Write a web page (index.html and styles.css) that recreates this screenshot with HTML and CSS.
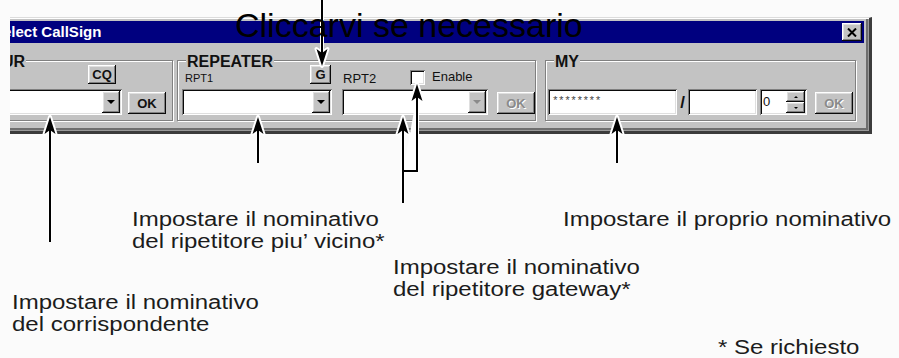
FILE: index.html
```html
<!DOCTYPE html>
<html lang="it">
<head>
    <meta charset="UTF-8">
    <title>Select CallSign</title>
    <link rel="stylesheet" href="styles.css">
</head>
<body>
<div class="stage">

    <!-- finestra di dialogo (tagliata a sinistra come nello screenshot) -->
    <div class="dlg-clip">
        <div class="dlg">
            <div class="titlebar">
                <span class="title">Select CallSign</span>
                <span class="btn close">
                    <svg width="10" height="9" viewBox="0 0 10 9"><path d="M1 0.5 L9 8.5 M9 0.5 L1 8.5" stroke="#000" stroke-width="2"/></svg>
                </span>
            </div>

            <div class="dlg-body">
                <!-- UR -->
                <div class="group group-ur">
                    <span class="legend legend-ur">UR</span>
                    <div class="field field-ur">
                        <div class="field-head head-ur">
                            <span class="btn small">CQ</span>
                        </div>
                        <div class="combo">
                            <span class="drop"><i class="tri"></i></span>
                        </div>
                    </div>
                    <span class="btn ok ok-ur">OK</span>
                </div>

                <!-- REPEATER -->
                <div class="group group-rpt">
                    <span class="legend">REPEATER</span>
                    <div class="field field-rpt1">
                        <div class="field-head head-rpt1">
                            <span class="lbl lbl-rpt1">RPT1</span>
                            <span class="btn small btn-g">G</span>
                        </div>
                        <div class="combo">
                            <span class="drop"><i class="tri"></i></span>
                        </div>
                    </div>
                    <div class="field field-rpt2">
                        <div class="field-head head-rpt2">
                            <span class="lbl lbl-rpt2">RPT2</span>
                            <span class="check"></span>
                            <span class="lbl lbl-enable">Enable</span>
                        </div>
                        <div class="combo">
                            <span class="drop"><i class="tri off"></i></span>
                        </div>
                    </div>
                    <span class="btn ok ok-rpt disabled">OK</span>
                </div>

                <!-- MY -->
                <div class="group group-my">
                    <span class="legend">MY</span>
                    <div class="edit edit-my">********</div>
                    <span class="slash">/</span>
                    <div class="edit edit-sfx"></div>
                    <div class="edit spin">
                        <span class="spin-val">0</span>
                        <span class="spin-btns">
                            <span class="btn spin-btn"><i class="tri-s up"></i></span>
                            <span class="btn spin-btn"><i class="tri-s"></i></span>
                        </span>
                    </div>
                    <span class="btn ok ok-my disabled">OK</span>
                </div>
            </div>
        </div>
    </div>

    <!-- frecce delle annotazioni -->
    <svg class="arrows" width="899" height="358" viewBox="0 0 899 358">
        <g class="halo" fill="#fff" stroke="#fff" stroke-width="4" stroke-linejoin="round">
            <path d="M50 128 V242 M258 128 V163 M617 128 V163 M403 128 V203 M403 171 H417 V95 M322 0 V54"/>
            <path d="M50 117 L55.5 134 L50 130 L44.5 134 Z"/>
            <path d="M258 117 L263.5 134 L258 130 L252.5 134 Z"/>
            <path d="M617 117 L622.5 134 L617 130 L611.5 134 Z"/>
            <path d="M403 117 L408.5 134 L403 130 L397.5 134 Z"/>
            <path d="M417 84 L422.5 101 L417 97 L411.5 101 Z"/>
            <path d="M322 66 L327.5 49 L322 53 L316.5 49 Z"/>
        </g>
        <g fill="none" stroke="#000" stroke-width="2">
            <path d="M50 128 V242 M258 128 V163 M617 128 V163 M403 128 V203 M403 171 H418 M417 171 V95 M322 0 V54"/>
        </g>
        <g fill="#000">
            <path d="M50 117 L55.5 134 L50 130 L44.5 134 Z"/>
            <path d="M258 117 L263.5 134 L258 130 L252.5 134 Z"/>
            <path d="M617 117 L622.5 134 L617 130 L611.5 134 Z"/>
            <path d="M403 117 L408.5 134 L403 130 L397.5 134 Z"/>
            <path d="M417 84 L422.5 101 L417 97 L411.5 101 Z"/>
            <path d="M322 66 L327.5 49 L322 53 L316.5 49 Z"/>
        </g>
    </svg>

    <!-- testi delle annotazioni -->
    <div class="callout callout-top">Cliccarvi se necessario</div>
    <div class="note note-ur">Impostare il nominativo<br>del corrispondente</div>
    <div class="note note-rpt1">Impostare il nominativo<br>del ripetitore piu’ vicino*</div>
    <div class="note note-rpt2">Impostare il nominativo<br>del ripetitore gateway*</div>
    <div class="note note-my">Impostare il proprio nominativo</div>
    <div class="note note-star">* Se richiesto</div>
</div>
</body>
</html>
```

FILE: styles.css
```css
body {
    margin: 0;
    background-color: #fbfbfb;
    font-family: "Liberation Sans", Arial, sans-serif;
}
.stage {
    position: relative;
    width: 899px;
    height: 358px;
    overflow: hidden;
}

/* Finestra */
.dlg-clip {
    margin: 17px 0 0 10px;
    width: 862px;
    overflow: hidden;
}
.dlg {
    margin-left: -22px;
    width: 884px;
    box-sizing: border-box;
    background-color: #c3c3c3;
    border-style: solid;
    border-width: 1px 3px 3px 1px;
    border-color: #dcdcdc #3c3c3c #3c3c3c #dcdcdc;
    box-shadow: inset 1px 1px #fff, inset -1px -1px #9a9a9a, inset -3px -3px #6e6e6e;
    padding: 3px 5px 4px 3px;
}
.titlebar {
    display: flex;
    align-items: center;
    height: 22px;
    background-color: #00007f;
    padding-left: 1px;
    padding-right: 2px;
}
.title {
    flex: 1;
    color: #fff;
    font-weight: bold;
    font-size: 15px;
    line-height: 22px;
    white-space: nowrap;
}
.dlg-body {
    display: flex;
    align-items: flex-start;
    padding: 17px 0 6px 3px;
}

/* Gruppi */
.group {
    position: relative;
    box-sizing: border-box;
    height: 61px;
    display: flex;
    align-items: flex-end;
    border: 1px solid #808080;
    box-shadow: inset 1px 1px #fff, 1px 1px #fff;
    padding: 4px 0 5px 0;
}
.group-ur { width: 178px; }
.group-rpt { width: 359px; margin-left: 4px; }
.group-my { width: 311px; margin-left: 9px; }
.legend {
    position: absolute;
    top: -8px;
    left: 8px;
    padding: 0 1px;
    background-color: #c3c3c3;
    font-weight: bold;
    font-size: 16px;
    line-height: 18px;
    color: #111;
}
.legend-ur { left: 5px; }

.field {
    display: flex;
    flex-direction: column;
    gap: 4px;
}
.field-head {
    display: flex;
    align-items: flex-end;
    height: 20px;
}
.field-ur { width: 116px; margin-left: 10px; }
.head-ur { justify-content: flex-end; align-items: flex-start; padding-right: 6px; }
.field-rpt1 { width: 150px; margin-left: 4px; }
.head-rpt1 { justify-content: space-between; padding: 0 1px 0 3px; }
.head-rpt1 .btn-g { align-self: flex-start; }
.field-rpt2 { width: 146px; margin-left: 10px; }
.head-rpt2 { padding-left: 1px; }

.lbl {
    line-height: 13px;
    color: #111;
    white-space: nowrap;
}
.lbl-rpt1 { font-size: 11px; }
.lbl-rpt2 { font-size: 13px; width: 67px; }
.lbl-enable { font-size: 13px; margin-left: 7px; padding-bottom: 2px; }

/* Pulsanti stile Win95 */
.btn {
    display: flex;
    align-items: center;
    justify-content: center;
    box-sizing: border-box;
    background-color: #c3c3c3;
    box-shadow: inset -1px -1px #0a0a0a, inset 1px 1px #fff, inset -2px -2px #808080, inset 2px 2px #dfdfdf;
    font-weight: bold;
    font-size: 13px;
    color: #111;
}
.btn.small { width: 28px; height: 19px; }
.btn.btn-g { width: 21px; }
.btn.ok { width: 38px; height: 22px; margin-bottom: 1px; }
.ok-ur { margin-left: 6px; }
.ok-rpt { width: 36px; margin-left: 9px; }
.ok-my { width: 35px; margin-left: 8px; }
.btn.disabled {
    color: #8a8a8a;
    text-shadow: 1px 1px #fff;
}
.btn.close {
    width: 20px;
    height: 18px;
}

/* Campi */
.combo, .edit {
    box-sizing: border-box;
    height: 26px;
    background-color: #fff;
    box-shadow: inset 1px 1px #808080, inset -1px -1px #fff, inset 2px 2px #0a0a0a, inset -2px -2px #dfdfdf;
    padding: 2px;
}
.combo {
    display: flex;
    justify-content: flex-end;
}
.drop {
    width: 18px;
    display: flex;
    align-items: center;
    justify-content: center;
    background-color: #c3c3c3;
    box-shadow: inset -1px -1px #0a0a0a, inset 1px 1px #fff, inset -2px -2px #808080, inset 2px 2px #dfdfdf;
}
.tri {
    width: 0;
    height: 0;
    border-left: 4px solid transparent;
    border-right: 4px solid transparent;
    border-top: 4px solid #000;
}
.tri.off {
    border-top-color: #8a8a8a;
}

.edit-my {
    width: 129px;
    margin-left: 2px;
    padding: 5px 4px;
    font-family: "Liberation Mono", monospace;
    font-size: 11px;
    line-height: 14px;
    letter-spacing: -0.5px;
    color: #444;
}
.slash {
    width: 11px;
    text-align: center;
    font-weight: bold;
    font-size: 17px;
    line-height: 24px;
    color: #111;
}
.edit-sfx { width: 69px; }
.spin {
    width: 47px;
    margin-left: 3px;
    display: flex;
}
.spin-val {
    flex: 1;
    font-size: 13px;
    line-height: 22px;
    padding-left: 1px;
    color: #111;
}
.spin-btns {
    display: flex;
    flex-direction: column;
    width: 19px;
}
.btn.spin-btn {
    flex: 1;
}
.tri-s {
    width: 0;
    height: 0;
    border-left: 2px solid transparent;
    border-right: 2px solid transparent;
    border-top: 2px solid #000;
}
.tri-s.up {
    border-top: 0;
    border-bottom: 2px solid #000;
}
.check {
    box-sizing: border-box;
    width: 15px;
    height: 15px;
    background-color: #fff;
    box-shadow: inset 1px 1px #808080, inset -1px -1px #fff, inset 2px 2px #0a0a0a, inset -2px -2px #dfdfdf;
}

/* Annotazioni */
.arrows {
    position: absolute;
    left: 0;
    top: 0;
}
.callout {
    position: absolute;
    white-space: nowrap;
    color: #000;
}
.callout-top {
    left: 235px;
    top: 8px;
    font-size: 34px;
    line-height: 34px;
}
.note {
    position: absolute;
    font-size: 20px;
    line-height: 22px;
    color: #1c1c1c;
    white-space: nowrap;
    transform: scaleX(1.2);
    transform-origin: left top;
}
.note-ur { left: 12px; top: 291px; }
.note-rpt1 { left: 132px; top: 208px; }
.note-rpt2 { left: 393px; top: 256px; }
.note-my { left: 563px; top: 208px; }
.note-star { left: 718px; top: 336px; }
```
